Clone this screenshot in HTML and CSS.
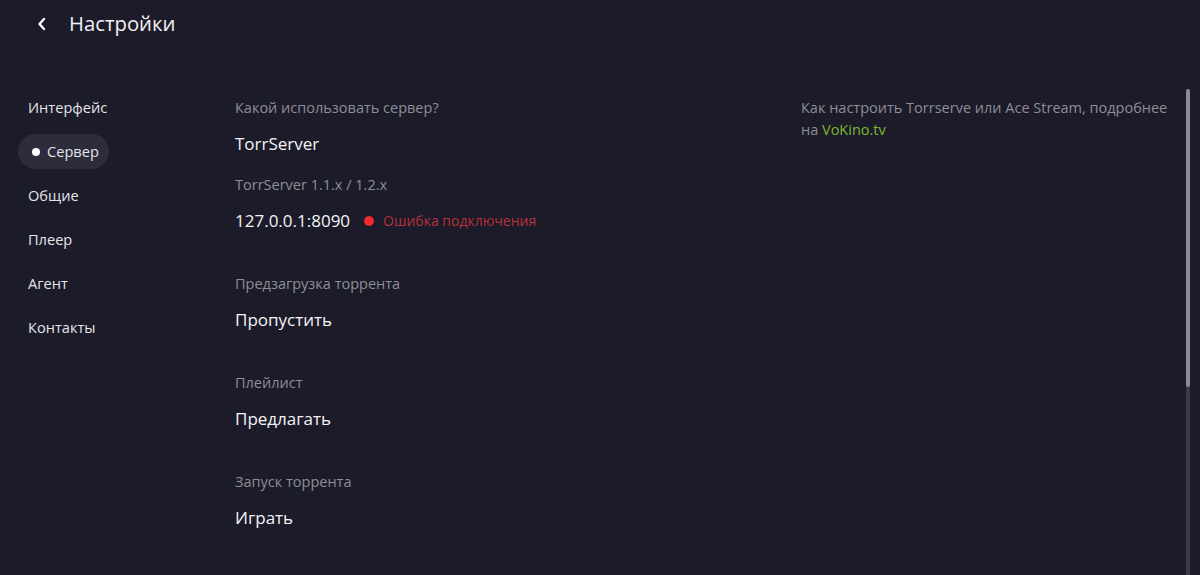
FILE: index.html
```html
<!DOCTYPE html>
<html lang="ru">
  <head>
    <meta charset="utf-8">
    <title>Настройки</title>
    <link rel="stylesheet" href="styles.css">
  </head>
  <body>
    <!-- Header -->
    <div class="header">
      <span class="back">
        <svg width="10" height="14" viewBox="0 0 10 14"><path d="M7 2 L2.5 7 L7 12" fill="none" stroke="#fff" stroke-width="2.4" stroke-linecap="round" stroke-linejoin="round"/></svg>
      </span>
      <h1 class="title">Настройки</h1>
    </div>

    <div class="main">
      <!-- Menu -->
      <ul class="menu">
        <li>Интерфейс</li>
        <li class="active">Сервер</li>
        <li>Общие</li>
        <li>Плеер</li>
        <li>Агент</li>
        <li>Контакты</li>
      </ul>

      <!-- Settings -->
      <div class="content">
        <div class="group">
          <div class="label">Какой использовать сервер?</div>
          <div class="value">TorrServer</div>
          <div class="label">TorrServer 1.1.x / 1.2.x</div>
          <div class="value">127.0.0.1:8090 <span class="status">Ошибка подключения</span></div>
        </div>
        <div class="group">
          <div class="label">Предзагрузка торрента</div>
          <div class="value">Пропустить</div>
        </div>
        <div class="group">
          <div class="label">Плейлист</div>
          <div class="value">Предлагать</div>
        </div>
        <div class="group">
          <div class="label">Запуск торрента</div>
          <div class="value">Играть</div>
        </div>
      </div>

      <div class="aside">
        Как настроить Torrserve или Ace Stream, подробнее на <a href="#">VoKino.tv</a>
      </div>

      <div class="scrollbar"><div class="thumb"></div></div>
    </div>
  </body>
</html>
```

FILE: styles.css
```css
body {
  margin: 0;
  height: 575px;
  overflow: hidden;
  background: #1c1b29;
  color: #f2f2f4;
  font-family: "Open Sans", "Noto Sans", sans-serif;
}

/* Header */
.header { display: flex; align-items: center; height: 46px; padding-left: 37px; }
.back { display: flex; width: 10px; height: 14px; margin-top: 2px; }
.title { margin: 0 0 0 22px; font-size: 20.3px; font-weight: 400; line-height: 46px; }

.main { display: flex; height: 486px; margin-top: 43px; }

/* Menu */
.menu { list-style: none; margin: 0; padding: 1px 0 0 18px; width: 235px; flex: none; box-sizing: border-box; display: flex; flex-direction: column; align-items: flex-start; gap: 9px; }
.menu li { padding: 7px 10px; line-height: 21px; font-size: 14.6px; color: #e4e4ea; border-radius: 18px; display: flex; align-items: center; }
.menu li.active { background: #2d2c3a; }
.menu li.active::before { content: ""; width: 8px; height: 8px; border-radius: 50%; background: #fff; margin: 0 7px 0 4px; }

/* Settings */
.content { flex: 1; padding-top: 9px; display: flex; flex-direction: column; }
.group { display: flex; flex-direction: column; margin-bottom: 22px; }
.label { font-size: 14.5px; line-height: 20px; color: #8e8d98; margin-bottom: 16px; }
.value { font-size: 17px; line-height: 20px; color: #f4f4f6; margin-bottom: 21px; display: flex; align-items: center; }
.status { display: flex; align-items: center; font-size: 14px; color: #b8303a; margin-left: 14px; }
.status::before { content: ""; width: 10px; height: 10px; border-radius: 50%; background: #ec2a2f; margin-right: 9px; }

.aside { width: 370px; flex: none; padding-top: 8px; font-size: 14.5px; line-height: 22px; color: #8e8d98; }
.aside a { color: #7cb82f; text-decoration: none; }

.scrollbar { width: 4px; flex: none; margin: 0 10px 0 15px; background: #3a3948; border-radius: 2px 2px 0 0; }
.thumb { height: 298px; background: #8b8a96; border-radius: 2px; }
```
